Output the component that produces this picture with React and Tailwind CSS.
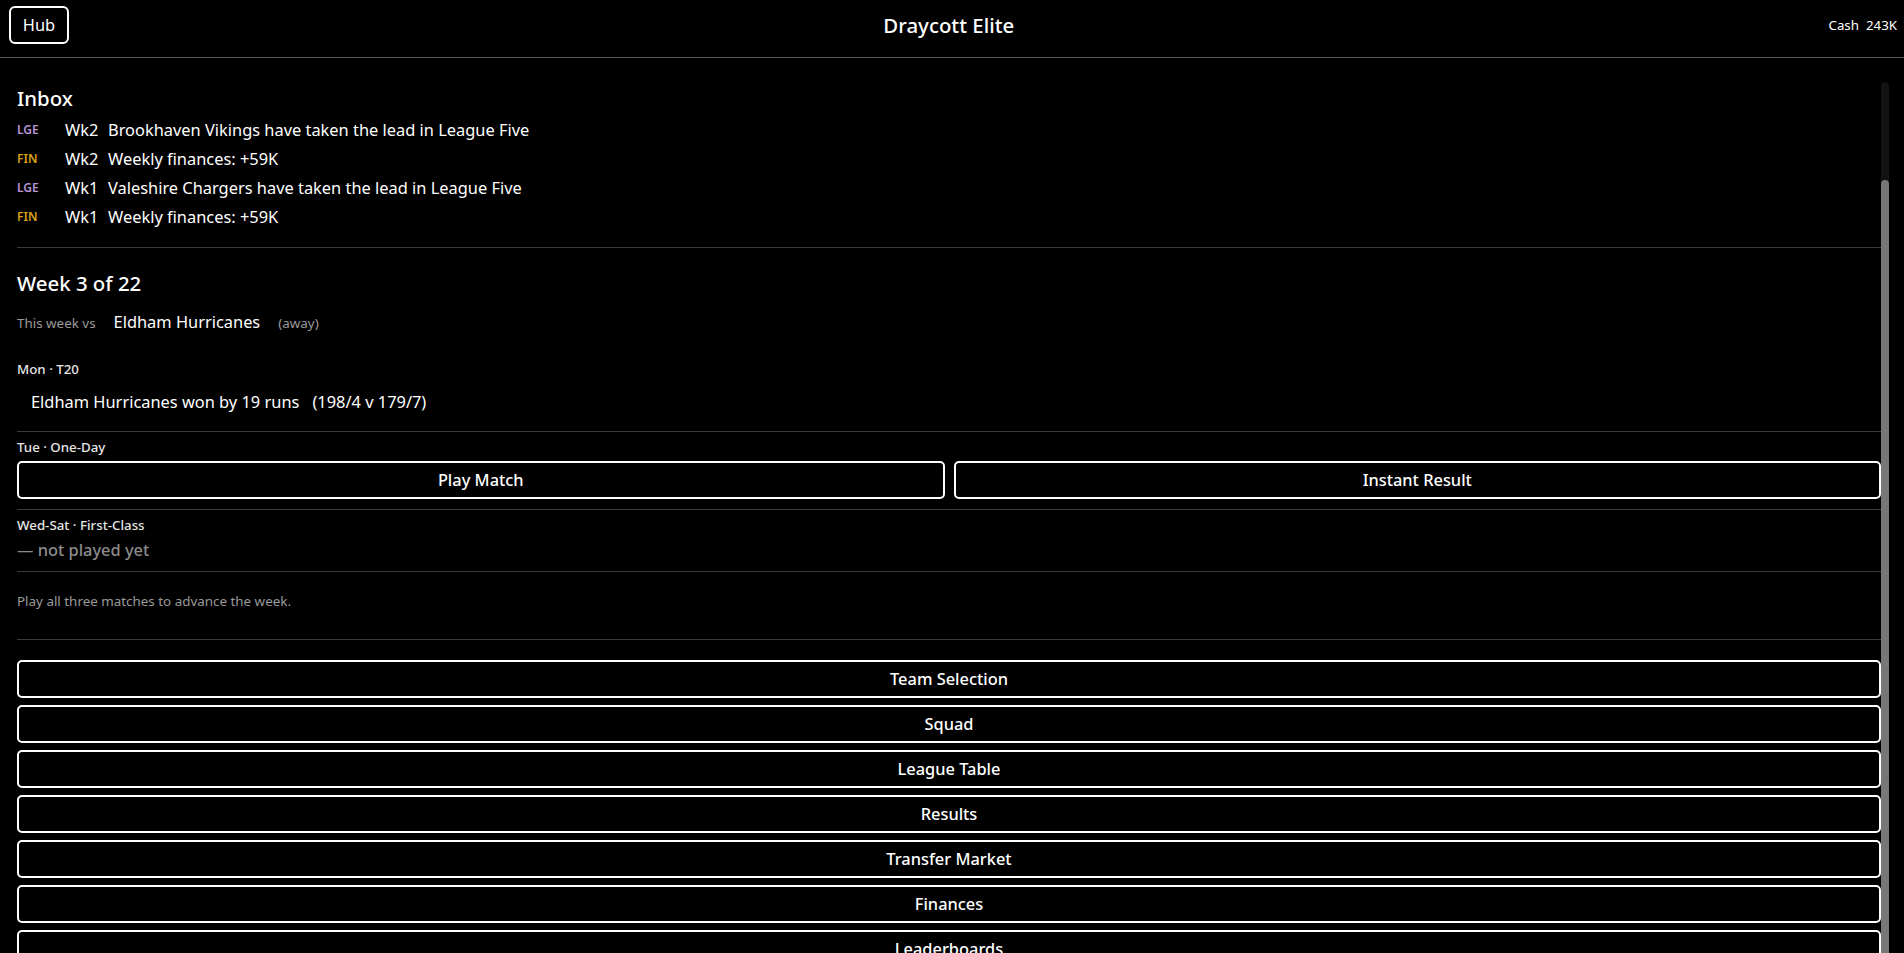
import React from "react";

const inbox = [
  { tag: "LGE", wk: "Wk2", text: "Brookhaven Vikings have taken the lead in League Five" },
  { tag: "FIN", wk: "Wk2", text: "Weekly finances: +59K" },
  { tag: "LGE", wk: "Wk1", text: "Valeshire Chargers have taken the lead in League Five" },
  { tag: "FIN", wk: "Wk1", text: "Weekly finances: +59K" },
];

const nav = [
  "Team Selection",
  "Squad",
  "League Table",
  "Results",
  "Transfer Market",
  "Finances",
  "Leaderboards",
];

export default function App() {
  return (
    <div className="h-screen w-full overflow-hidden bg-black text-white font-['Noto_Sans',sans-serif] flex flex-col">
      <header className="h-[58px] shrink-0 border-b border-[#555] flex items-start justify-between pt-[6px] pl-[9px] pr-[7px]">
        <button className="h-[38px] w-[60px] rounded-[6px] border-2 border-white text-[16.4px] leading-[24px] text-white">
          Hub
        </button>
        <div className="text-[20.4px] leading-[28px] font-medium mt-[5px]">Draycott Elite</div>
        <div className="flex gap-[7px] text-[13.3px] leading-[20px] mt-[9px]">
          <span>Cash</span>
          <span>243K</span>
        </div>
      </header>

      <div className="flex-1 min-h-0 flex">
        <main className="flex-1 min-w-0 overflow-hidden pl-[17px]">
          {/* Inbox */}
          <section className="pt-[26px] pb-[16px] border-b border-[#3a3a3a]">
            <h2 className="text-[20.4px] leading-[28px] font-medium mb-[3px]">Inbox</h2>
            {inbox.map((m, i) => (
              <div key={i} className="h-[29px] flex items-center">
                <span
                  className={
                    "w-[48px] text-[12px] font-semibold leading-[16px] " +
                    (m.tag === "LGE" ? "text-[#b894d6]" : "text-[#d9a016]")
                  }
                >
                  {m.tag}
                </span>
                <span className="w-[43px] text-[16.4px] leading-[24px]">{m.wk}</span>
                <span className="text-[16.4px] leading-[24px]">{m.text}</span>
              </div>
            ))}
          </section>

          {/* Week */}
          <section className="pt-[21px]">
            <h2 className="text-[20.4px] leading-[28px] font-medium">Week 3 of 22</h2>
            <div className="mt-[13px] flex items-baseline gap-[18px]">
              <span className="text-[13.4px] leading-[20px] text-[#9a9a9a]">This week vs</span>
              <span className="text-[16.4px] leading-[24px]">Eldham Hurricanes</span>
              <span className="text-[13.4px] leading-[20px] text-[#9a9a9a]">(away)</span>
            </div>

            <div className="mt-[25px] pb-[10px] border-b border-[#3a3a3a]">
              <div className="text-[13.3px] leading-[20px] font-medium text-[#e6e6e6] mb-[4px]">Mon · T20</div>
              <div className="px-[14px] py-[7px] text-[16.4px] leading-[24px] flex gap-[13px]">
                <span>Eldham Hurricanes won by 19 runs</span>
                <span>(198/4 v 179/7)</span>
              </div>
            </div>

            <div className="pt-[5px] pb-[10px] border-b border-[#3a3a3a]">
              <div className="text-[13.3px] leading-[20px] font-medium text-[#e6e6e6] mb-[4px]">Tue · One-Day</div>
              <div className="grid grid-cols-2 gap-[9px]">
                <button className="h-[38px] rounded-[5px] border-2 border-white text-[16.4px] leading-[24px] font-medium">
                  Play Match
                </button>
                <button className="h-[38px] rounded-[5px] border-2 border-white text-[16.4px] leading-[24px] font-medium">
                  Instant Result
                </button>
              </div>
            </div>

            <div className="pt-[5px] pb-[9px] border-b border-[#3a3a3a]">
              <div className="text-[13.3px] leading-[20px] font-medium text-[#e6e6e6] mb-[3px]">Wed-Sat · First-Class</div>
              <div className="text-[16.4px] leading-[24px] font-medium text-[#8c8c8c]">— not played yet</div>
            </div>

            <div className="pt-[19px] pb-[28px] border-b border-[#3a3a3a]">
              <div className="text-[13.4px] leading-[20px] text-[#9a9a9a]">Play all three matches to advance the week.</div>
            </div>
          </section>

          {/* Navigation */}
          <nav className="pt-[20px] flex flex-col gap-[7px]">
            {nav.map((n) => (
              <button
                key={n}
                className="h-[38px] w-full rounded-[5px] border-2 border-white text-[16.4px] leading-[24px] font-medium"
              >
                {n}
              </button>
            ))}
          </nav>
        </main>

        {/* Scrollbar */}
        <div className="w-[8px] mr-[15px] mt-[24px] flex flex-col rounded-t-full bg-[#121212]">
          <div className="h-[98px] shrink-0" />
          <div className="flex-1 rounded-t-full bg-[#777]" />
        </div>
      </div>
    </div>
  );
}
